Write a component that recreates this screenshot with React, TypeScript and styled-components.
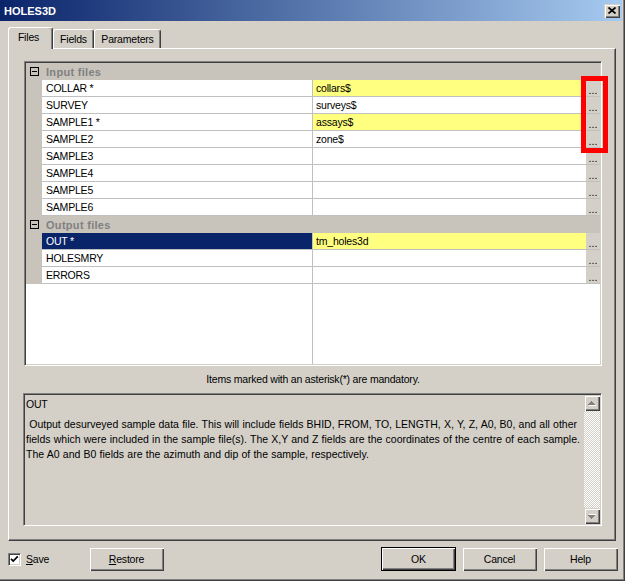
import React from 'react';
import styled, { createGlobalStyle, css } from 'styled-components';

type FileRow = {
  label: string;
  value?: string;
  required?: boolean;
  selected?: boolean;
};

const inputFiles: FileRow[] = [
  { label: 'COLLAR *', value: 'collars$', required: true },
  { label: 'SURVEY', value: 'surveys$' },
  { label: 'SAMPLE1 *', value: 'assays$', required: true },
  { label: 'SAMPLE2', value: 'zone$' },
  { label: 'SAMPLE3' },
  { label: 'SAMPLE4' },
  { label: 'SAMPLE5' },
  { label: 'SAMPLE6' },
];

const outputFiles: FileRow[] = [
  { label: 'OUT *', value: 'tm_holes3d', required: true, selected: true },
  { label: 'HOLESMRY' },
  { label: 'ERRORS' },
];

const CollapseIcon = () => (
  <svg width="9" height="9" viewBox="0 0 9 9">
    <rect x="0.5" y="0.5" width="8" height="8" fill="none" stroke="#000" />
    <path d="M2 4.5h5" stroke="#000" />
  </svg>
);

const ArrowIcon = ({ down }: { down?: boolean }) => (
  <svg width="8" height="5" viewBox="0 0 8 5">
    <g transform={down ? 'translate(0 5) scale(1 -1)' : undefined}>
      <path d="M4 1h1v1h1v1h1v1h1v1H1V4h1V3h1V2h1z" fill="#fff" />
      <path d="M3 0h1v1h1v1h1v1h1v1H0V3h1V2h1V1h1z" fill="#808080" />
    </g>
  </svg>
);

const Group = ({ title, rows }: { title: string; rows: FileRow[] }) => (
  <>
    <GroupRow>
      <Toggle>
        <CollapseIcon />
      </Toggle>
      <GroupTitle>{title}</GroupTitle>
    </GroupRow>
    {rows.map((r) => (
      <Row key={r.label}>
        <Gutter />
        <LabelCell $selected={r.selected}>{r.label}</LabelCell>
        <ValueCell $required={r.required}>{r.value}</ValueCell>
        <BrowseCell>...</BrowseCell>
      </Row>
    ))}
  </>
);

const App = () => {
  return (
    <>
      <GlobalStyle />
      <Window>
        <TitleBar>
          <Title>HOLES3D</Title>
          <CloseButton>
            <svg width="8" height="7" viewBox="0 0 8 7">
              <path d="M0.5 0.5L7.5 6.5M7.5 0.5L0.5 6.5" stroke="#000" strokeWidth="1.7" />
            </svg>
          </CloseButton>
        </TitleBar>

        <TabStrip>
          <Tab $active $width={45}>Files</Tab>
          <Tab $width={41}>Fields</Tab>
          <Tab $width={67}>Parameters</Tab>
        </TabStrip>

        <TabPanel>
          <Grid>
            <Group title="Input files" rows={inputFiles} />
            <Group title="Output files" rows={outputFiles} />
            <Filler>
              <FillerLeft />
            </Filler>
            {/* red marker drawn over the browse buttons */}
            <Highlight />
          </Grid>

          <Note>Items marked with an asterisk(*) are mandatory.</Note>

          <Description>
            <DescText>
              <DescTitle>OUT</DescTitle>
              <DescBody>
                {' Output desurveyed sample data file. This will include fields BHID, FROM, TO, LENGTH, X, Y, Z, A0, B0, and all other'}
                <br />
                fields which were included in the sample file(s). The X,Y and Z fields are the coordinates of the centre of each sample.
                <br />
                The A0 and B0 fields are the azimuth and dip of the sample, respectively.
              </DescBody>
            </DescText>
            <ScrollBar>
              <ScrollButton>
                <ArrowIcon />
              </ScrollButton>
              <ScrollTrack />
              <ScrollButton>
                <ArrowIcon down />
              </ScrollButton>
            </ScrollBar>
          </Description>
        </TabPanel>

        <Footer>
          <CheckGroup>
            <CheckBox>
              <svg width="9" height="9" viewBox="0 0 9 9">
                <path d="M1 3.8L3.2 6L7.8 1.4" stroke="#000" strokeWidth="1.7" fill="none" />
              </svg>
            </CheckBox>
            <CheckLabel>
              <u>S</u>ave
            </CheckLabel>
          </CheckGroup>
          <Button>
            <u>R</u>estore
          </Button>
          <ButtonGroup>
            <Button $default>OK</Button>
            <Button>Cancel</Button>
            <Button>Help</Button>
          </ButtonGroup>
        </Footer>
      </Window>
    </>
  );
};

const GlobalStyle = createGlobalStyle`
  html, body {
    margin: 0;
    padding: 0;
    background: #d4d0c8;
  }
  body {
    font-family: 'Liberation Sans', Arial, sans-serif;
    font-size: 10.5px;
    letter-spacing: -0.2px;
    color: #000;
  }
  * {
    box-sizing: border-box;
  }
`;

const raised = css`
  background: #d4d0c8;
  box-shadow: inset 1px 1px 0 #d4d0c8, inset 2px 2px 0 #fff,
    inset -1px -1px 0 #404040, inset -2px -2px 0 #808080;
`;

const Window = styled.div`
  width: 625px;
  height: 581px;
  background: #d4d0c8;
  display: flex;
  flex-direction: column;
  box-shadow: inset -1px -1px 0 #404040, inset -2px -2px 0 #808080;
  overflow: hidden;
`;

const TitleBar = styled.div`
  height: 21px;
  margin-right: 3px;
  padding: 0 2px 0 4px;
  display: flex;
  align-items: center;
  justify-content: space-between;
  background: linear-gradient(to right, #0a246a, #a6caf0);
`;

const Title = styled.span`
  color: #fff;
  font-size: 11px;
  font-weight: bold;
  letter-spacing: 0;
`;

const CloseButton = styled.div`
  ${raised};
  width: 16px;
  height: 14px;
  display: flex;
  align-items: center;
  justify-content: center;
`;

const TabStrip = styled.div`
  position: relative;
  z-index: 1;
  height: 21px;
  margin: 6px 0 0 8px;
  display: flex;
  align-items: flex-end;
`;

const Tab = styled.div<{ $active?: boolean; $width: number }>`
  width: ${(p) => p.$width}px;
  height: ${(p) => (p.$active ? 22 : 19)}px;
  margin-bottom: ${(p) => (p.$active ? -1 : 0)}px;
  padding-bottom: ${(p) => (p.$active ? 3 : 1)}px;
  padding-right: ${(p) => (p.$active ? 4 : 0)}px;
  display: flex;
  align-items: center;
  justify-content: center;
  background: #d4d0c8;
  border-top: 1px solid #fff;
  border-left: 1px solid #fff;
  border-right: 1px solid #404040;
  border-radius: 3px 3px 0 0;
  box-shadow: inset -1px 0 0 #808080;
`;

const TabPanel = styled.div`
  width: 608px;
  height: 493px;
  margin-left: 8px;
  padding: 12px 0 0 15px;
  display: flex;
  flex-direction: column;
  border-top: 1px solid #fff;
  border-left: 1px solid #fff;
  border-right: 1px solid #404040;
  border-bottom: 1px solid #404040;
  box-shadow: inset -1px -1px 0 #808080;
`;

const Grid = styled.div`
  position: relative;
  width: 578px;
  height: 305px;
  padding: 1px;
  display: flex;
  flex-direction: column;
  background: #fff;
  border-top: 1px solid #808080;
  border-left: 1px solid #808080;
  border-right: 1px solid #fff;
  border-bottom: 1px solid #fff;
  box-shadow: inset 1px 1px 0 #404040, inset -1px -1px 0 #d4d0c8;
`;

const GroupRow = styled.div`
  height: 17px;
  flex-shrink: 0;
  display: flex;
  align-items: center;
  background: #c8c4bc;
`;

const Toggle = styled.span`
  width: 16px;
  display: flex;
  justify-content: center;
`;

const GroupTitle = styled.span`
  padding-left: 4px;
  font-size: 11px;
  font-weight: bold;
  letter-spacing: 0.3px;
  color: #808080;
`;

const Row = styled.div`
  height: 17px;
  flex-shrink: 0;
  display: flex;
`;

const Gutter = styled.div`
  width: 16px;
  background: #c8c4bc;
`;

const LabelCell = styled.div<{ $selected?: boolean }>`
  width: 271px;
  padding-left: 4px;
  line-height: 16px;
  border-right: 1px solid #c0c0c0;
  border-bottom: 1px solid #c0c0c0;
  background: ${(p) => (p.$selected ? '#0a246a' : '#fff')};
  color: ${(p) => (p.$selected ? '#fff' : '#000')};
`;

const ValueCell = styled.div<{ $required?: boolean }>`
  width: 273px;
  padding-left: 3px;
  line-height: 16px;
  border-bottom: 1px solid #c0c0c0;
  background: ${(p) => (p.$required ? '#ffff80' : '#fff')};
`;

const BrowseCell = styled.div`
  width: 14px;
  display: flex;
  align-items: flex-end;
  justify-content: center;
  line-height: 12px;
  letter-spacing: 0;
  background: #d4d0c8;
  border-bottom: 1px solid #c0c0c0;
`;

const Filler = styled.div`
  flex: 1;
  display: flex;
`;

const FillerLeft = styled.div`
  width: 287px;
  border-right: 1px solid #c0c0c0;
`;

const Highlight = styled.div`
  position: absolute;
  left: 556px;
  top: 14px;
  width: 27px;
  height: 77px;
  border: 5px solid #ff0000;
  pointer-events: none;
`;

const Note = styled.div`
  width: 578px;
  height: 27px;
  line-height: 27px;
  text-align: center;
`;

const Description = styled.div`
  width: 579px;
  height: 133px;
  margin-left: -1px;
  display: flex;
  border-top: 1px solid #808080;
  border-left: 1px solid #808080;
  border-right: 1px solid #fff;
  border-bottom: 1px solid #fff;
  box-shadow: inset 1px 1px 0 #404040, inset -1px -1px 0 #d4d0c8;
  padding: 1px;
`;

const DescText = styled.div`
  flex: 1;
  padding: 2px 0 0 1px;
  line-height: 14px;
`;

const DescTitle = styled.div``;

const DescBody = styled.div`
  margin-top: 6px;
  line-height: 15px;
  letter-spacing: 0;
  word-spacing: 0.3px;
  white-space: pre;
`;

const ScrollBar = styled.div`
  width: 16px;
  display: flex;
  flex-direction: column;
`;

const ScrollButton = styled.div`
  ${raised};
  height: 16px;
  display: flex;
  align-items: center;
  justify-content: center;
`;

const ScrollTrack = styled.div`
  flex: 1;
  background-image: repeating-conic-gradient(#fff 0 25%, #d4d0c8 0 50%);
  background-size: 2px 2px;
`;

const Footer = styled.div`
  height: 24px;
  margin-top: 6px;
  padding: 0 7px 0 8px;
  display: flex;
  align-items: center;
`;

const CheckGroup = styled.label`
  width: 81px;
  display: flex;
  align-items: center;
`;

const CheckBox = styled.span`
  width: 13px;
  height: 13px;
  display: flex;
  align-items: center;
  justify-content: center;
  background: #fff;
  border-top: 1px solid #808080;
  border-left: 1px solid #808080;
  border-right: 1px solid #fff;
  border-bottom: 1px solid #fff;
  box-shadow: inset 1px 1px 0 #404040, inset -1px -1px 0 #d4d0c8;
`;

const CheckLabel = styled.span`
  margin-left: 5px;
`;

const ButtonGroup = styled.div`
  margin-left: auto;
  display: flex;
  gap: 6px;
`;

const Button = styled.button<{ $default?: boolean }>`
  width: 75px;
  height: 24px;
  padding: 0;
  border: none;
  font: inherit;
  letter-spacing: inherit;
  color: #000;
  ${raised};
  ${(p) =>
    p.$default &&
    css`
      box-shadow: inset 0 0 0 1px #000, inset 2px 2px 0 #fff,
        inset -2px -2px 0 #404040, inset -3px -3px 0 #808080;
    `}
`;

export default App;
